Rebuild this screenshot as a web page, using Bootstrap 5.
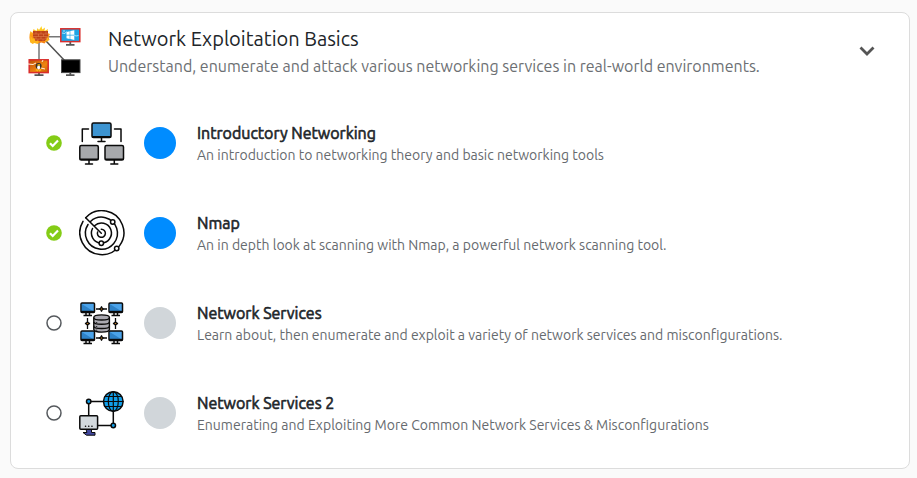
<!DOCTYPE html>
<html lang="en">
<head>
<meta charset="utf-8">
<meta name="viewport" content="width=device-width, initial-scale=1">
<title>Network Exploitation Basics</title>
<link href="https://cdn.jsdelivr.net/npm/bootstrap@5.3.0/dist/css/bootstrap.min.css" rel="stylesheet">
<style>
  body { font-family: Ubuntu, "Noto Sans", sans-serif; background: #fafafa; color: #212529; }
  .page-pad { padding: 12px 7px 9px 10px; }
  .module { border: 1px solid #dcdcdc; border-radius: 8px; padding-bottom: 10px; }
  .module-head { min-height: 85px; padding: 0 33px 8px 17px; gap: 26px; }
  .module-title { font-size: 20px; line-height: 28px; }
  .module-sub { font-size: 16px; line-height: 26px; color: #6c6f73; }
  .room { min-height: 90px; padding: 0 34px 0 35px; gap: 17px; }
  .room-title { font-size: 16px; line-height: 22px; font-weight: 400; -webkit-text-stroke: 0.6px currentColor; color: #212529; }
  .room-desc { font-size: 14px; line-height: 22px; color: #666a6e; }
  .room-text { padding-top: 2px; }
  .dot { width: 32px; height: 32px; background: #d1d6da; margin: 0 4px 0 2px; }
  .dot-on { background: #008cff; }
  .ln { fill: none; stroke: #0a0a0a; stroke-width: 1.5; stroke-linecap: round; stroke-linejoin: round; }
</style>
<script src="https://cdn.jsdelivr.net/npm/bootstrap@5.3.0/dist/js/bootstrap.bundle.min.js"></script>
</head>
<body>
<svg width="0" height="0" class="position-absolute" aria-hidden="true">
  <defs>
    <linearGradient id="fire" x1="0" y1="0" x2="0" y2="1"><stop offset="0" stop-color="#ffe52e"/><stop offset=".5" stop-color="#ff9d12"/><stop offset="1" stop-color="#f47a12"/></linearGradient>
    <linearGradient id="amber" x1="0" y1="0" x2="1" y2="1"><stop offset="0" stop-color="#bc4b08"/><stop offset=".6" stop-color="#ef8610"/><stop offset="1" stop-color="#c95708"/></linearGradient>
    <symbol id="done" viewBox="0 0 16 16"><circle cx="8" cy="8" r="7.8" fill="#84cc16"/><path d="M4 8.300l2.700 2.700 5.300-5.400" fill="none" stroke="#fff" stroke-width="2.200"/></symbol>
    <symbol id="todo" viewBox="0 0 16 16"><circle cx="8" cy="8" r="7" fill="none" stroke="#55595d" stroke-width="1.500"/></symbol>
    <symbol id="pc" viewBox="0 0 16 15"><rect x="1" y="1" width="13.500" height="9.500" rx="1" fill="#4ba3ea" stroke="#0a0a0a" stroke-width="1.500"/><path d="M1.800 2v7.500h12z" fill="#2e82c8"/><path d="M1 9.800h13.500" stroke="#0a0a0a" stroke-width="2"/><path d="M6 11v2.500M9.500 11v2.500M3.500 13.500h8.500" stroke="#0a0a0a" stroke-width="1.500"/></symbol>
    <symbol id="link" viewBox="0 0 12 6"><path d="M.5 3h11M6 .3v5.400" stroke="#0a0a0a" stroke-width="1.300"/><path d="M4.300 3L6 1.300 7.700 3 6 4.700z" fill="#d98a22" stroke="#0a0a0a" stroke-width="1.200"/></symbol>
  </defs>
</svg>

<main class="container-fluid page-pad">
  <section class="module bg-white">
    <button type="button" class="module-head btn border-0 rounded-0 w-100 d-flex align-items-center text-start" data-bs-toggle="collapse" data-bs-target="#rooms" aria-expanded="true" aria-controls="rooms">
      <svg width="54" height="52" viewBox="0 0 54 52" class="flex-shrink-0" aria-hidden="true">
        <path d="M20 10.700h14M11 16v19" stroke="#777" stroke-width="1.500"/>
        <path d="M18 15l19 20" stroke="#505050" stroke-width="1.500"/>
        <path d="M3 17C1 14 1 9 2.500 5l2 2 1-4 3 2 1-3 1.500 2L13.500 0l.8 3.500L17 1.500l-.5 3.500L20 3l-.5 4 2.500 1-1.500 3 1 3-3 1-2 2.500-3-1-4 1-1.500-1.500z" fill="url(#fire)"/>
        <path d="M5 5h15v10H5z" fill="#bd4217"/>
        <path d="M5 8h15M5 10.500h15M5 13h15M8 5.500V8M13 5.500V8M18 5.500V8M10.500 8v2.500M15.500 8v2.500M8 10.500V13M13 10.500V13M18 10.500V13M10 13v2M15 13v2" stroke="#e58a52" stroke-width=".5"/>
        <path d="M2.500 10l2.500 3 .8-2 1.700 4 2.500-.6 1 1.600-1.500 2-3-1-2 1-2.500-2zM16 15.500l2.500-2 .5-3 2 3-1.500 2z" fill="#ffb51c"/>
        <path d="M38 18.800h8.500M42.300 16v3M6.500 49.200h9M11 47v2.500M38 49.200h8.500M42.300 47v2.500" stroke="#555" stroke-width="1.800"/>
        <rect x="32.800" y="2.800" width="19" height="12.800" fill="#20a4e5" stroke="#d92d2b" stroke-width="1.500"/>
        <path d="M38.500 6l3.200-.8v3.600h-3.200zM42.300 5.100l4-.9v4.600h-4zM38.500 9.400h3.200V13l-3.200-.8zM42.300 9.400h4V14l-4-.9z" fill="#fff"/>
        <path d="M34 7l3 .5 1.500-2M46 9l2 1 2.500-.5M35 5h2" fill="none" stroke="#c9efff" stroke-width=".8"/>
        <rect x="1.200" y="33.800" width="19" height="12.800" fill="url(#amber)" stroke="#d92d2b" stroke-width="1.500"/>
        <path d="M0 38l5 .5 3-1.500M13 42l4 1M14 36l1-2" fill="none" stroke="#fff1d8" stroke-width="1"/>
        <circle cx="10.600" cy="40" r="3" fill="#35312c"/><ellipse cx="10.600" cy="41.500" rx="1.500" ry="2" fill="#fff"/><path d="M8 43.500l2 1.500M13 43.500L11 45M9.500 39h2.500" stroke="#f7ba17" stroke-width="1.500"/>
        <rect x="33.500" y="33.800" width="18.500" height="12.800" fill="#000" stroke="#4a4a4a"/>
      </svg>
      <span class="flex-grow-1">
        <span class="module-title d-block">Network Exploitation Basics</span>
        <span class="module-sub d-block">Understand, enumerate and attack various networking services in real-world environments.</span>
      </span>
      <svg width="18" height="12" viewBox="0 0 18 12" class="flex-shrink-0" aria-hidden="true"><path d="M2.500 1.500L9 8l6.500-6.500" fill="none" stroke="#555" stroke-width="2.800"/></svg>
    </button>

    <div id="rooms" class="collapse show">
      <article class="room d-flex align-items-center">
        <svg width="16" height="16" class="flex-shrink-0" role="img" aria-label="Completed"><use href="#done"/></svg>
        <svg width="46" height="46" viewBox="0 0 46 46" class="flex-shrink-0" aria-hidden="true">
          <g class="ln">
            <path d="M9.500 9H3.300v12.500M35.500 9H42v12.500"/>
            <path d="M22.500 17.500v4M19 21.500h7"/><rect x="13" y="3" width="19" height="14.500" rx="1.500" fill="#3d94d1"/><path d="M13.500 16.800h18"/>
            <path d="M10 40v4M6.500 44h7M35.300 40v4M31.800 44h7"/>
            <rect x=".8" y="25.500" width="18.500" height="14.500" rx="1.500" fill="#a7a9ac"/>
            <rect x="26" y="25.500" width="18.500" height="14.500" rx="1.500" fill="#a7a9ac"/>
            <path d="M1.300 39.300h17.500M26.500 39.300H44"/>
          </g>
        </svg>
        <span class="dot dot-on rounded-circle flex-shrink-0"></span>
        <div class="room-text">
          <a href="#introductory-networking" class="room-title d-block text-decoration-none">Introductory Networking</a>
          <p class="room-desc mb-0">An introduction to networking theory and basic networking tools</p>
        </div>
      </article>

      <article class="room d-flex align-items-center">
        <svg width="16" height="16" class="flex-shrink-0" role="img" aria-label="Completed"><use href="#done"/></svg>
        <svg width="46" height="46" viewBox="0 0 46 46" class="flex-shrink-0" aria-hidden="true">
          <g class="ln">
            <path d="M6.700 7.700A22 22 0 1 1 4 11.300"/>
            <path d="M11.500 11.500A16 16 0 1 1 9 14.500"/>
            <path d="M15.500 15.800A10 10 0 1 1 13.500 18.500"/>
            <path d="M22.300 19.300A4 4 0 1 1 18.600 22"/>
            <path d="M6.700 7.700l15.600 15.600"/>
            <g fill="#fff"><circle cx="33.700" cy="12" r="2.200"/><circle cx="22.300" cy="33.300" r="2.200"/><circle cx="37.700" cy="38.500" r="2.200"/></g>
          </g>
        </svg>
        <span class="dot dot-on rounded-circle flex-shrink-0"></span>
        <div class="room-text">
          <a href="#nmap" class="room-title d-block text-decoration-none">Nmap</a>
          <p class="room-desc mb-0">An in depth look at scanning with Nmap, a powerful network scanning tool.</p>
        </div>
      </article>

      <article class="room d-flex align-items-center">
        <svg width="16" height="16" class="flex-shrink-0" role="img" aria-label="Not started"><use href="#todo"/></svg>
        <svg width="46" height="46" viewBox="0 0 46 46" class="flex-shrink-0" aria-hidden="true">
          <use href="#pc" x="1" y="2" width="16" height="15"/><use href="#pc" x="29" y="2" width="16" height="15"/>
          <use href="#pc" x="1" y="30" width="16" height="15"/><use href="#pc" x="29" y="30" width="16" height="15"/>
          <use href="#link" x="16.500" y="6" width="12" height="6"/><use href="#link" x="16.500" y="35" width="12" height="6"/>
          <use href="#link" x="2.500" y="20.500" width="12" height="6" transform="rotate(90 8.500 23.500)"/><use href="#link" x="30.500" y="20.500" width="12" height="6" transform="rotate(90 36.500 23.500)"/>
          <path d="M14.800 17.500c0-3.500 15.600-3.500 15.600 0v12c0 3.500-15.600 3.500-15.600 0z" fill="#aaa9b1" stroke="#0a0a0a" stroke-width="1.400"/>
          <path d="M14.800 17.800c0 3 15.600 3 15.600 0M14.800 22c0 3 15.600 3 15.600 0M14.800 26.200c0 3 15.600 3 15.600 0" fill="none" stroke="#0a0a0a" stroke-width="1.400"/>
          <path d="M17.500 22.200v.8M17.500 26.300v.8M17.500 29.800v.8" stroke="#0a0a0a" stroke-width="1.500"/>
        </svg>
        <span class="dot rounded-circle flex-shrink-0"></span>
        <div class="room-text">
          <a href="#network-services" class="room-title d-block text-decoration-none">Network Services</a>
          <p class="room-desc mb-0">Learn about, then enumerate and exploit a variety of network services and misconfigurations.</p>
        </div>
      </article>

      <article class="room d-flex align-items-center">
        <svg width="16" height="16" class="flex-shrink-0" role="img" aria-label="Not started"><use href="#todo"/></svg>
        <svg width="46" height="46" viewBox="0 0 46 46" class="flex-shrink-0" aria-hidden="true">
          <g class="ln">
            <path d="M9.700 25V11.500H24M34.300 21.500v14H19"/>
            <g fill="#109ee8"><circle cx="9.700" cy="11.500" r="2.200"/><circle cx="34.300" cy="35.500" r="2.200"/><circle cx="34.300" cy="11.500" r="9.800"/></g>
            <path d="M34.300 1.700v19.600M24.500 11.500h19.600M26 6.500h16.600M26 16.500h16.600" stroke-width="1.200"/><ellipse cx="34.300" cy="11.500" rx="5" ry="9.800" stroke-width="1.200"/>
            <path d="M7.500 39.500h5v3H16v2.700H7.500L4 42.500h3.500z" fill="#4249a1" stroke-width="1"/>
            <rect x=".8" y="25.800" width="17.800" height="13.500" rx="1" fill="#d3d9dd"/>
            <path d="M6.500 36.300h.1M9.700 36.300h.1M12.900 36.300h.1"/>
          </g>
        </svg>
        <span class="dot rounded-circle flex-shrink-0"></span>
        <div class="room-text">
          <a href="#network-services-2" class="room-title d-block text-decoration-none">Network Services 2</a>
          <p class="room-desc mb-0">Enumerating and Exploiting More Common Network Services &amp; Misconfigurations</p>
        </div>
      </article>
    </div>
  </section>
</main>
</body>
</html>
